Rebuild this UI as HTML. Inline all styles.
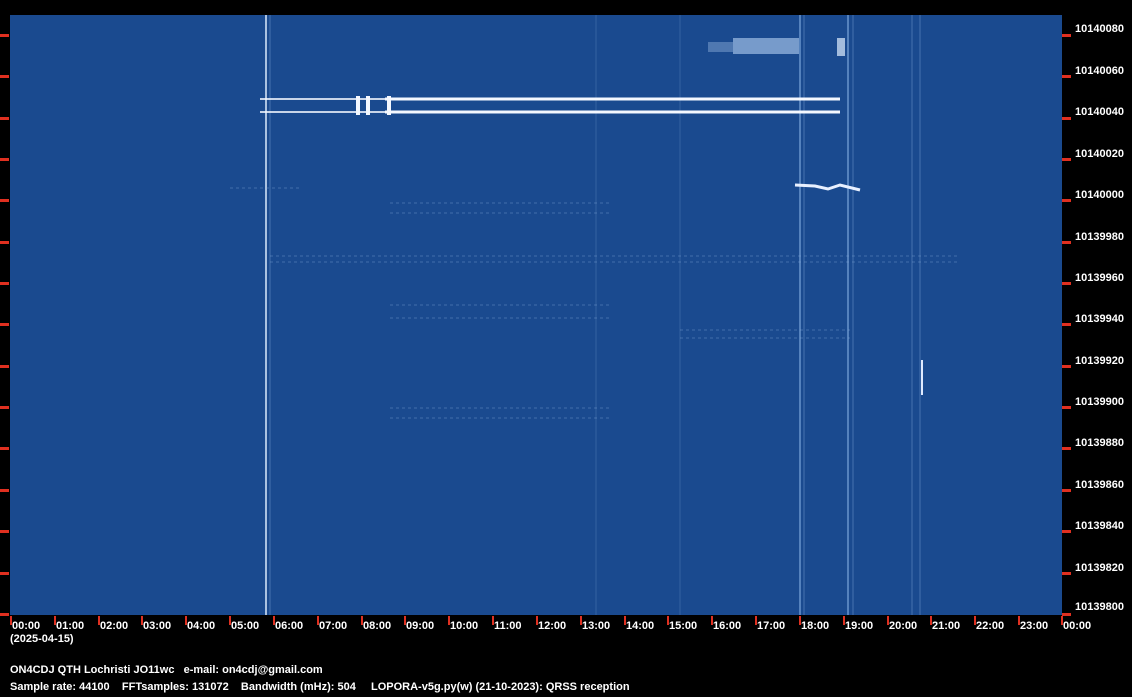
<!DOCTYPE html>
<html><head><meta charset="utf-8"><style>
html,body{margin:0;padding:0;background:#000;width:1132px;height:697px;overflow:hidden}
svg{display:block}
text{font-family:"Liberation Sans",sans-serif;font-weight:bold;font-size:11px;fill:#fff;white-space:pre}
</style></head><body>
<svg width="1132" height="697" viewBox="0 0 1132 697">
<rect width="1132" height="697" fill="#000"/>
<rect x="10" y="15" width="1052" height="600" fill="#1a4a8f"/>
<g stroke="#6f9ad0" stroke-opacity="0.5">
<line x1="266" y1="15" x2="266" y2="615" stroke="#cfe0f5" stroke-width="2" stroke-opacity="0.8"/>
<line x1="270" y1="15" x2="270" y2="615" stroke-width="1"/>
<line x1="800" y1="15" x2="800" y2="615" stroke-width="2" stroke-opacity="0.7"/>
<line x1="804" y1="15" x2="804" y2="615" stroke-width="1"/>
<line x1="848" y1="15" x2="848" y2="615" stroke-width="2" stroke-opacity="0.7"/>
<line x1="853" y1="15" x2="853" y2="615" stroke-width="1"/>
<line x1="912" y1="15" x2="912" y2="615" stroke-width="1"/>
<line x1="920" y1="15" x2="920" y2="615" stroke-width="1"/>
<line x1="596" y1="15" x2="596" y2="615" stroke-width="1" stroke-opacity="0.3"/>
<line x1="680" y1="15" x2="680" y2="615" stroke-width="1" stroke-opacity="0.3"/>
</g>
<g stroke="#8fb4e0" stroke-opacity="0.35" stroke-dasharray="3 3">
<line x1="230" y1="188" x2="300" y2="188"/>
<line x1="390" y1="203" x2="610" y2="203"/>
<line x1="390" y1="213" x2="610" y2="213"/>
<line x1="270" y1="256" x2="960" y2="256"/>
<line x1="270" y1="262" x2="960" y2="262"/>
<line x1="390" y1="305" x2="610" y2="305"/>
<line x1="390" y1="318" x2="610" y2="318"/>
<line x1="680" y1="330" x2="850" y2="330"/>
<line x1="680" y1="338" x2="850" y2="338"/>
<line x1="390" y1="408" x2="610" y2="408"/>
<line x1="390" y1="418" x2="610" y2="418"/>
</g>
<g stroke="#f4f8ff" stroke-width="3">
<line x1="260" y1="99" x2="840" y2="99" stroke-width="2" stroke-opacity="0.8"/>
<line x1="260" y1="112" x2="840" y2="112" stroke-width="2" stroke-opacity="0.8"/>
<line x1="385" y1="99" x2="840" y2="99"/>
<line x1="385" y1="112" x2="840" y2="112"/>
<line x1="358" y1="96" x2="358" y2="115" stroke-width="4"/>
<line x1="368" y1="96" x2="368" y2="115" stroke-width="4"/>
<line x1="389" y1="96" x2="389" y2="115" stroke-width="4"/>
</g>
<rect x="733" y="38" width="66" height="16" fill="#9fbde4" opacity="0.7"/>
<rect x="708" y="42" width="25" height="10" fill="#9fbde4" opacity="0.4"/>
<rect x="837" y="38" width="8" height="18" fill="#c5d8f0" opacity="0.8"/>
<polyline points="795,185 815,186 828,189 840,185 860,190" fill="none" stroke="#e8f0ff" stroke-width="3"/>
<line x1="922" y1="360" x2="922" y2="395" stroke="#dfeaff" stroke-width="2"/>
<g fill="#e03020">
<rect x="0" y="34" width="9" height="3"/><rect x="0" y="75" width="9" height="3"/><rect x="0" y="117" width="9" height="3"/><rect x="0" y="158" width="9" height="3"/><rect x="0" y="199" width="9" height="3"/><rect x="0" y="241" width="9" height="3"/><rect x="0" y="282" width="9" height="3"/><rect x="0" y="323" width="9" height="3"/><rect x="0" y="365" width="9" height="3"/><rect x="0" y="406" width="9" height="3"/><rect x="0" y="447" width="9" height="3"/><rect x="0" y="489" width="9" height="3"/><rect x="0" y="530" width="9" height="3"/><rect x="0" y="572" width="9" height="3"/><rect x="0" y="613" width="9" height="3"/>
<rect x="1062" y="34" width="9" height="3"/><rect x="1062" y="75" width="9" height="3"/><rect x="1062" y="117" width="9" height="3"/><rect x="1062" y="158" width="9" height="3"/><rect x="1062" y="199" width="9" height="3"/><rect x="1062" y="241" width="9" height="3"/><rect x="1062" y="282" width="9" height="3"/><rect x="1062" y="323" width="9" height="3"/><rect x="1062" y="365" width="9" height="3"/><rect x="1062" y="406" width="9" height="3"/><rect x="1062" y="447" width="9" height="3"/><rect x="1062" y="489" width="9" height="3"/><rect x="1062" y="530" width="9" height="3"/><rect x="1062" y="572" width="9" height="3"/><rect x="1062" y="613" width="9" height="3"/>
<rect x="10" y="616" width="2" height="9"/><rect x="54" y="616" width="2" height="9"/><rect x="98" y="616" width="2" height="9"/><rect x="141" y="616" width="2" height="9"/><rect x="185" y="616" width="2" height="9"/><rect x="229" y="616" width="2" height="9"/><rect x="273" y="616" width="2" height="9"/><rect x="317" y="616" width="2" height="9"/><rect x="361" y="616" width="2" height="9"/><rect x="404" y="616" width="2" height="9"/><rect x="448" y="616" width="2" height="9"/><rect x="492" y="616" width="2" height="9"/><rect x="536" y="616" width="2" height="9"/><rect x="580" y="616" width="2" height="9"/><rect x="624" y="616" width="2" height="9"/><rect x="667" y="616" width="2" height="9"/><rect x="711" y="616" width="2" height="9"/><rect x="755" y="616" width="2" height="9"/><rect x="799" y="616" width="2" height="9"/><rect x="843" y="616" width="2" height="9"/><rect x="887" y="616" width="2" height="9"/><rect x="930" y="616" width="2" height="9"/><rect x="974" y="616" width="2" height="9"/><rect x="1018" y="616" width="2" height="9"/><rect x="1061" y="616" width="2" height="9"/>
</g>
<g>
<text x="1075" y="32">10140080</text><text x="1075" y="74">10140060</text><text x="1075" y="115">10140040</text><text x="1075" y="157">10140020</text><text x="1075" y="198">10140000</text><text x="1075" y="240">10139980</text><text x="1075" y="281">10139960</text><text x="1075" y="322">10139940</text><text x="1075" y="364">10139920</text><text x="1075" y="405">10139900</text><text x="1075" y="446">10139880</text><text x="1075" y="488">10139860</text><text x="1075" y="529">10139840</text><text x="1075" y="571">10139820</text><text x="1075" y="610">10139800</text>
</g>
<g>
<text x="12" y="629">00:00</text><text x="56" y="629">01:00</text><text x="100" y="629">02:00</text><text x="143" y="629">03:00</text><text x="187" y="629">04:00</text><text x="231" y="629">05:00</text><text x="275" y="629">06:00</text><text x="319" y="629">07:00</text><text x="363" y="629">08:00</text><text x="406" y="629">09:00</text><text x="450" y="629">10:00</text><text x="494" y="629">11:00</text><text x="538" y="629">12:00</text><text x="582" y="629">13:00</text><text x="626" y="629">14:00</text><text x="669" y="629">15:00</text><text x="713" y="629">16:00</text><text x="757" y="629">17:00</text><text x="801" y="629">18:00</text><text x="845" y="629">19:00</text><text x="889" y="629">20:00</text><text x="932" y="629">21:00</text><text x="976" y="629">22:00</text><text x="1020" y="629">23:00</text><text x="1063" y="629">00:00</text>
<text x="10" y="642">(2025-04-15)</text>
<text x="10" y="673" xml:space="preserve">ON4CDJ QTH Lochristi JO11wc   e-mail: on4cdj@gmail.com</text>
<text x="10" y="690" xml:space="preserve">Sample rate: 44100    FFTsamples: 131072    Bandwidth (mHz): 504</text>
<text x="371" y="690">LOPORA-v5g.py(w) (21-10-2023): QRSS reception</text>
</g>
</svg>
</body></html>
